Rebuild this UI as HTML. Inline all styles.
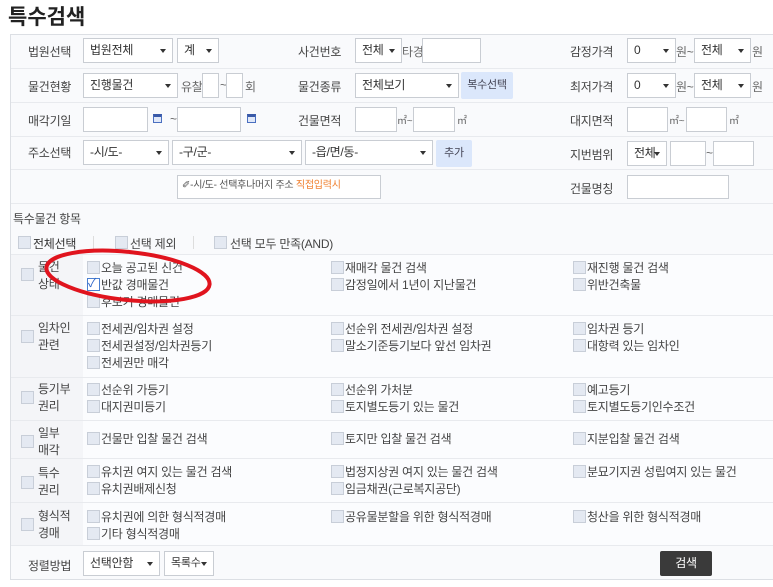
<!DOCTYPE html>
<html><head><meta charset="utf-8"><style>
*{box-sizing:border-box;margin:0;padding:0}
body{width:773px;height:587px;background:#fff;font-family:"Liberation Sans","Noto Sans CJK KR",sans-serif;font-size:12px;color:#444;position:relative;overflow:hidden;letter-spacing:-0.25px}
.a{position:absolute;white-space:nowrap}
.title{left:8px;top:1px;font-size:21px;font-weight:bold;color:#222;letter-spacing:0}
.panel{left:10px;top:34px;width:775px;height:546px;border:1px solid #dcdfe4;background:#f9fafc}
.hl{position:absolute;left:11px;width:770px;height:1px;background:#e8eaee}
.lb{color:#444}
.sel,.inp{position:absolute;background:#fff;border:1px solid #c9cdd3;height:25px;line-height:23px;padding-left:6px;color:#333}
.sel:after{content:"";position:absolute;right:6px;top:10px;border-left:3px solid transparent;border-right:3px solid transparent;border-top:4px solid #333}
.btn{position:absolute;background:#dbe7fb;border-radius:2px;height:27px;line-height:27px;text-align:center;color:#445;font-size:11px}
.cb{position:absolute;width:13px;height:13px;background:#e4e9f2;border:1px solid #c8ced8}
.cal{position:absolute;width:9px;height:9px;background:#e0e8f8;border:1px solid #4a6fc0;border-top:3px solid #3a5aa8}
.sm{color:#666}
</style></head><body>
<div class="a title">특수검색</div>
<div class="a panel"></div>
<div class="hl" style="top:68px"></div>
<div class="hl" style="top:102px"></div>
<div class="hl" style="top:136px"></div>
<div class="hl" style="top:169px"></div>
<div class="hl" style="top:203px"></div>

<div class="a lb" style="left:28px;top:43px">법원선택</div>
<div class="sel" style="left:83px;top:38px;width:90px">법원전체</div>
<div class="sel" style="left:177px;top:38px;width:42px">계</div>
<div class="a lb" style="left:298px;top:43px">사건번호</div>
<div class="sel" style="left:355px;top:38px;width:47px">전체</div>
<div class="a" style="left:402px;top:43px;color:#666">타경</div>
<div class="inp" style="left:422px;top:38px;width:59px"></div>
<div class="a lb" style="left:570px;top:43px">감정가격</div>
<div class="sel" style="left:627px;top:38px;width:49px">0</div>
<div class="a sm" style="left:676px;top:43px">원~</div>
<div class="sel" style="left:694px;top:38px;width:57px">전체</div>
<div class="a sm" style="left:752px;top:43px">원</div>

<div class="a lb" style="left:28px;top:78px">물건현황</div>
<div class="sel" style="left:83px;top:73px;width:95px">진행물건</div>
<div class="a sm" style="left:181px;top:78px">유찰</div>
<div class="inp" style="left:202px;top:73px;width:17px"></div>
<div class="a sm" style="left:220px;top:78px">~</div>
<div class="inp" style="left:226px;top:73px;width:17px"></div>
<div class="a sm" style="left:245px;top:78px">회</div>
<div class="a lb" style="left:298px;top:78px">물건종류</div>
<div class="sel" style="left:355px;top:73px;width:104px">전체보기</div>
<div class="btn" style="left:461px;top:72px;width:52px">복수선택</div>
<div class="a lb" style="left:570px;top:78px">최저가격</div>
<div class="sel" style="left:627px;top:73px;width:49px">0</div>
<div class="a sm" style="left:676px;top:78px">원~</div>
<div class="sel" style="left:694px;top:73px;width:57px">전체</div>
<div class="a sm" style="left:752px;top:78px">원</div>

<div class="a lb" style="left:28px;top:112px">매각기일</div>
<div class="inp" style="left:83px;top:107px;width:65px"></div>
<div class="cal" style="left:153px;top:114px"></div>
<div class="a sm" style="left:170px;top:112px">~</div>
<div class="inp" style="left:177px;top:107px;width:64px"></div>
<div class="cal" style="left:247px;top:114px"></div>
<div class="a lb" style="left:298px;top:112px">건물면적</div>
<div class="inp" style="left:355px;top:107px;width:42px"></div>
<div class="a sm" style="left:397px;top:112px;font-size:10px">㎡~</div>
<div class="inp" style="left:413px;top:107px;width:42px"></div>
<div class="a sm" style="left:457px;top:112px;font-size:10px">㎡</div>
<div class="a lb" style="left:570px;top:112px">대지면적</div>
<div class="inp" style="left:627px;top:107px;width:41px"></div>
<div class="a sm" style="left:669px;top:112px;font-size:10px">㎡~</div>
<div class="inp" style="left:686px;top:107px;width:41px"></div>
<div class="a sm" style="left:729px;top:112px;font-size:10px">㎡</div>

<div class="a lb" style="left:28px;top:144px">주소선택</div>
<div class="sel" style="left:83px;top:140px;width:86px">-시/도-</div>
<div class="sel" style="left:172px;top:140px;width:130px">-구/군-</div>
<div class="sel" style="left:305px;top:140px;width:128px">-읍/면/동-</div>
<div class="btn" style="left:436px;top:140px;width:36px">추가</div>
<div class="a lb" style="left:570px;top:146px">지번범위</div>
<div class="sel" style="left:627px;top:141px;width:40px">전체</div>
<div class="inp" style="left:670px;top:141px;width:36px"></div>
<div class="a sm" style="left:706px;top:146px">~</div>
<div class="inp" style="left:713px;top:141px;width:41px"></div>

<div class="inp" style="left:177px;top:175px;width:204px;height:24px;line-height:20px;padding-left:4px;font-size:10px;color:#555">✐-시/도- 선택후나머지 주소 <span style="color:#f08030">직접입력시</span></div>
<div class="a lb" style="left:570px;top:180px">건물명칭</div>
<div class="inp" style="left:627px;top:175px;width:102px;height:24px"></div>

<div class="a lb" style="left:13px;top:210px">특수물건 항목</div>
<div class="cb" style="left:18px;top:236px"></div><div class="a" style="left:33px;top:235px;color:#333">전체선택</div>
<div class="a" style="left:93px;top:236px;width:1px;height:13px;background:#ddd"></div>
<div class="cb" style="left:115px;top:236px"></div><div class="a" style="left:130px;top:235px">선택 제외</div>
<div class="a" style="left:193px;top:236px;width:1px;height:13px;background:#ddd"></div>
<div class="cb" style="left:214px;top:236px"></div><div class="a" style="left:230px;top:235px">선택 모두 만족(AND)</div>

<div class="a" style="left:11px;top:254px;width:770px;height:325px;background:#fbfcfe"></div>
<div class="a" style="left:11px;top:254px;width:72px;height:325px;background:#f4f5f8"></div>
<div class="hl" style="top:254px"></div>
<div class="hl" style="top:315px"></div>
<div class="hl" style="top:377px"></div>
<div class="hl" style="top:420px"></div>
<div class="hl" style="top:458px"></div>
<div class="hl" style="top:502px"></div>
<div class="hl" style="top:545px"></div>
<div class="a" style="left:11px;top:546px;width:770px;height:33px;background:#f9fafc"></div>

<div class="cb" style="left:21px;top:268px"></div><div class="a" style="left:38px;top:259px;line-height:17px">물건<br>상태</div>
<div class="cb" style="left:21px;top:330px"></div><div class="a" style="left:38px;top:320px;line-height:17px">임차인<br>관련</div>
<div class="cb" style="left:21px;top:391px"></div><div class="a" style="left:38px;top:381px;line-height:17px">등기부<br>권리</div>
<div class="cb" style="left:21px;top:435px"></div><div class="a" style="left:38px;top:425px;line-height:17px">일부<br>매각</div>
<div class="cb" style="left:21px;top:476px"></div><div class="a" style="left:38px;top:465px;line-height:17px">특수<br>권리</div>
<div class="cb" style="left:21px;top:518px"></div><div class="a" style="left:38px;top:508px;line-height:17px">형식적<br>경매</div>

<div class="cb" style="left:87px;top:261px"></div><div class="a" style="left:101px;top:259px">오늘 공고된 신건</div>
<div class="cb" style="left:87px;top:278px;background:#fff;border-color:#4a7fd0"></div><div class="a" style="left:88px;top:274px;color:#2a62c8;font-size:12px">✓</div><div class="a" style="left:101px;top:276px">반값 경매물건</div>
<div class="cb" style="left:87px;top:295px"></div><div class="a" style="left:101px;top:293px">후보기 경매물건</div>
<div class="cb" style="left:331px;top:261px"></div><div class="a" style="left:345px;top:259px">재매각 물건 검색</div>
<div class="cb" style="left:331px;top:278px"></div><div class="a" style="left:345px;top:276px">감정일에서 1년이 지난물건</div>
<div class="cb" style="left:573px;top:261px"></div><div class="a" style="left:587px;top:259px">재진행 물건 검색</div>
<div class="cb" style="left:573px;top:278px"></div><div class="a" style="left:587px;top:276px">위반건축물</div>

<div class="cb" style="left:87px;top:322px"></div><div class="a" style="left:101px;top:320px">전세권/임차권 설정</div>
<div class="cb" style="left:87px;top:339px"></div><div class="a" style="left:101px;top:337px">전세권설정/임차권등기</div>
<div class="cb" style="left:87px;top:356px"></div><div class="a" style="left:101px;top:354px">전세권만 매각</div>
<div class="cb" style="left:331px;top:322px"></div><div class="a" style="left:345px;top:320px">선순위 전세권/임차권 설정</div>
<div class="cb" style="left:331px;top:339px"></div><div class="a" style="left:345px;top:337px">말소기준등기보다 앞선 임차권</div>
<div class="cb" style="left:573px;top:322px"></div><div class="a" style="left:587px;top:320px">임차권 등기</div>
<div class="cb" style="left:573px;top:339px"></div><div class="a" style="left:587px;top:337px">대항력 있는 임차인</div>

<div class="cb" style="left:87px;top:383px"></div><div class="a" style="left:101px;top:381px">선순위 가등기</div>
<div class="cb" style="left:87px;top:400px"></div><div class="a" style="left:101px;top:398px">대지권미등기</div>
<div class="cb" style="left:331px;top:383px"></div><div class="a" style="left:345px;top:381px">선순위 가처분</div>
<div class="cb" style="left:331px;top:400px"></div><div class="a" style="left:345px;top:398px">토지별도등기 있는 물건</div>
<div class="cb" style="left:573px;top:383px"></div><div class="a" style="left:587px;top:381px">예고등기</div>
<div class="cb" style="left:573px;top:400px"></div><div class="a" style="left:587px;top:398px">토지별도등기인수조건</div>

<div class="cb" style="left:87px;top:432px"></div><div class="a" style="left:101px;top:430px">건물만 입찰 물건 검색</div>
<div class="cb" style="left:331px;top:432px"></div><div class="a" style="left:345px;top:430px">토지만 입찰 물건 검색</div>
<div class="cb" style="left:573px;top:432px"></div><div class="a" style="left:587px;top:430px">지분입찰 물건 검색</div>

<div class="cb" style="left:87px;top:465px"></div><div class="a" style="left:101px;top:463px">유치권 여지 있는 물건 검색</div>
<div class="cb" style="left:87px;top:482px"></div><div class="a" style="left:101px;top:480px">유치권배제신청</div>
<div class="cb" style="left:331px;top:465px"></div><div class="a" style="left:345px;top:463px">법정지상권 여지 있는 물건 검색</div>
<div class="cb" style="left:331px;top:482px"></div><div class="a" style="left:345px;top:480px">임금채권(근로복지공단)</div>
<div class="cb" style="left:573px;top:465px"></div><div class="a" style="left:587px;top:463px">분묘기지권 성립여지 있는 물건</div>

<div class="cb" style="left:87px;top:510px"></div><div class="a" style="left:101px;top:508px">유치권에 의한 형식적경매</div>
<div class="cb" style="left:87px;top:527px"></div><div class="a" style="left:101px;top:525px">기타 형식적경매</div>
<div class="cb" style="left:331px;top:510px"></div><div class="a" style="left:345px;top:508px">공유물분할을 위한 형식적경매</div>
<div class="cb" style="left:573px;top:510px"></div><div class="a" style="left:587px;top:508px">청산을 위한 형식적경매</div>

<div class="a lb" style="left:28px;top:557px">정렬방법</div>
<div class="sel" style="left:83px;top:551px;width:77px">선택안함</div>
<div class="sel" style="left:164px;top:551px;width:50px;font-size:11px">목록수</div>
<div class="a" style="left:660px;top:551px;width:52px;height:25px;background:#3a3a3a;border-radius:2px;color:#fff;text-align:center;line-height:25px">검색</div>

<svg class="a" style="left:0;top:0" width="773" height="587"><ellipse cx="128" cy="276" rx="82" ry="24" transform="rotate(6 128 276)" fill="none" stroke="#e0141e" stroke-width="4"/></svg>
</body></html>
